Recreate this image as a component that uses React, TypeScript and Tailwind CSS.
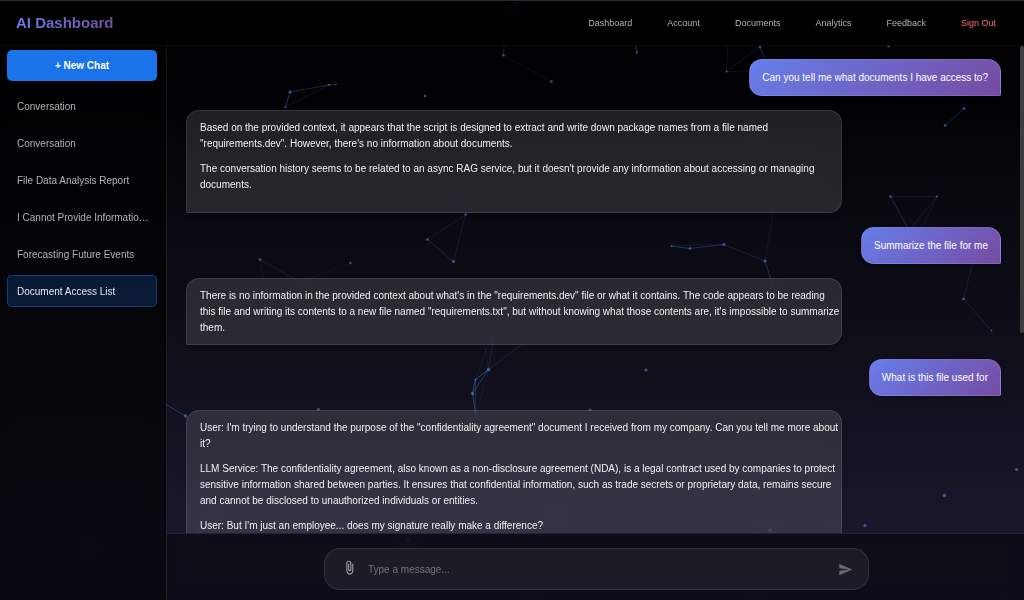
import React from "react";
import { MdAttachFile, MdSend } from "react-icons/md";

type Message = { from: "user" | "bot"; paragraphs: string[]; roomy?: boolean };

const navItems = ["Dashboard", "Account", "Documents", "Analytics", "Feedback"];

const conversations = [
  "Conversation",
  "Conversation",
  "File Data Analysis Report",
  "I Cannot Provide Informatio…",
  "Forecasting Future Events",
  "Document Access List",
];

const messages: Message[] = [
  { from: "user", paragraphs: ["Can you tell me what documents I have access to?"] },
  {
    from: "bot",
    roomy: true,
    paragraphs: [
      'Based on the provided context, it appears that the script is designed to extract and write down package names from a file named "requirements.dev". However, there\'s no information about documents.',
      "The conversation history seems to be related to an async RAG service, but it doesn't provide any information about accessing or managing documents.",
    ],
  },
  { from: "user", paragraphs: ["Summarize the file for me"] },
  {
    from: "bot",
    paragraphs: [
      'There is no information in the provided context about what\'s in the "requirements.dev" file or what it contains. The code appears to be reading this file and writing its contents to a new file named "requirements.txt", but without knowing what those contents are, it\'s impossible to summarize them.',
    ],
  },
  { from: "user", paragraphs: ["What is this file used for"] },
  {
    from: "bot",
    paragraphs: [
      'User: I\'m trying to understand the purpose of the "confidentiality agreement" document I received from my company. Can you tell me more about it?',
      "LLM Service: The confidentiality agreement, also known as a non-disclosure agreement (NDA), is a legal contract used by companies to protect sensitive information shared between parties. It ensures that confidential information, such as trade secrets or proprietary data, remains secure and cannot be disclosed to unauthorized individuals or entities.",
      "User: But I'm just an employee... does my signature really make a difference?",
    ],
  },
];

// x, y, radius
const nodes: [number, number, number][] = [
  [290, 92, 1.6], [285.5, 107, 1.1], [329, 85, 1], [336, 84.5, 0.8],
  [503.5, 55.5, 1.3], [551.5, 81.5, 1.3], [425, 96, 1.2], [637, 52.5, 1.1],
  [516, 4, 3], [506, 13, 2.4], [558, 12, 2], [368, 35, 2],
  [760, 47, 1.2], [726.5, 71.5, 1], [888.5, 46, 1.4], [864, 23, 2], [996, 40, 2],
  [964, 108.5, 1.3], [945, 125.5, 1.3], [890.5, 196.5, 1.2], [937, 196.5, 1.1],
  [465.5, 214.5, 1.2], [427.5, 239.5, 1.3], [453.5, 261.5, 1.6], [350.5, 263, 1.2],
  [260, 259.5, 1.3], [671.5, 246, 1.1], [690, 248.5, 1.3], [724, 244.5, 1.5], [765, 261, 1.6],
  [963.5, 299, 1.3], [991.5, 330.5, 0.9], [488.5, 369.5, 1.7], [475.5, 379.5, 1.1],
  [472.5, 393.5, 1.7], [646, 370, 1.6], [185.5, 416, 1.7], [318.5, 409.5, 1.5], [590, 410, 1.3],
  [1016.5, 469.5, 1.6], [944.5, 495.5, 1.8], [865, 525.5, 1.6],
  [555, 512, 1.6], [770, 530, 1.8], [705, 496, 1.8], [408, 540, 1.8], [530, 586, 1.8], [757, 586, 1.6],
  [90, 547, 1.6], [712, 158, 1.6], [758, 134, 1.6], [640, 196, 1.6],
];

// x1, y1, x2, y2, opacity
const links: [number, number, number, number, number][] = [
  [290, 92, 285.5, 107, 0.5], [290, 92, 329, 85, 0.36], [285.5, 107, 329, 85, 0.18], [329, 85, 336, 84.5, 0.4],
  [503.5, 55.5, 551.5, 81.5, 0.12], [503.5, 55.5, 506, 13, 0.3], [516, 4, 506, 13, 0.4], [516, 4, 558, 12, 0.2],
  [637, 52.5, 632, 30, 0.5], [760, 47, 726.5, 71.5, 0.24], [726.5, 71.5, 762, 71, 0.15], [726.5, 71.5, 728, 40, 0.15],
  [760, 47, 766, 63, 0.4], [888.5, 46, 864, 23, 0.4], [964, 108.5, 945, 125.5, 0.36],
  [890.5, 196.5, 937, 196.5, 0.18], [890.5, 196.5, 910, 232, 0.32], [937, 196.5, 908, 232, 0.16], [937, 196.5, 918, 236, 0.12],
  [427.5, 239.5, 465.5, 214.5, 0.16], [427.5, 239.5, 453.5, 261.5, 0.28], [465.5, 214.5, 453.5, 261.5, 0.15],
  [260, 259.5, 300, 282, 0.17], [260, 259.5, 264, 282, 0.1], [350.5, 263, 300, 282, 0.08],
  [671.5, 246, 690, 248.5, 0.45], [671.5, 246, 724, 244.5, 0.16], [690, 248.5, 724, 244.5, 0.36],
  [724, 244.5, 765, 261, 0.23], [765, 261, 774, 290, 0.36], [765, 261, 774, 206, 0.12],
  [963.5, 299, 991.5, 330.5, 0.19], [963.5, 299, 974, 258, 0.17],
  [488.5, 369.5, 475.5, 379.5, 0.6], [488.5, 369.5, 472.5, 393.5, 0.45], [475.5, 379.5, 472.5, 393.5, 0.6],
  [488.5, 369.5, 494, 335, 0.23], [488.5, 369.5, 484, 340, 0.1], [488.5, 369.5, 530, 338, 0.2],
  [475.5, 379.5, 492, 335, 0.13], [475.5, 379.5, 475, 415, 0.32], [472.5, 393.5, 476, 415, 0.5], [488.5, 369.5, 476, 415, 0.12],
  [185.5, 416, 160, 401, 0.45], [188, 546, 222, 508, 0.5],
];

function ParticleField() {
  return (
    <svg aria-hidden="true" className="pointer-events-none absolute inset-0 size-full">
      {links.map(([x1, y1, x2, y2, o], i) => (
        <line key={i} x1={x1} y1={y1} x2={x2} y2={y2} stroke="#4a78c8" strokeWidth="0.9" opacity={o} />
      ))}
      {nodes.map(([x, y, r], i) => (
        <circle key={i} cx={x} cy={y} r={r} fill="#4a78c8" opacity="0.7" />
      ))}
    </svg>
  );
}

function Header() {
  return (
    <header className="relative z-10 flex h-[46px] shrink-0 items-center justify-between border-t border-b border-t-[#2a2a35] border-b-white/5 bg-black/80 pr-7 pl-4 backdrop-blur-sm">
      <h1 className="bg-linear-to-r from-[#667eea] to-[#764ba2] bg-clip-text text-[15px] leading-5 font-bold text-transparent">
        AI Dashboard
      </h1>
      <nav className="flex items-center gap-[35px] text-[9px] leading-4 text-[#b3b3b3]">
        {navItems.map((item) => (
          <a key={item} href="#">
            {item}
          </a>
        ))}
        <a href="#" className="text-[#ff6b6b]">
          Sign Out
        </a>
      </nav>
    </header>
  );
}

function Sidebar() {
  return (
    <aside className="relative flex w-[167px] shrink-0 flex-col border-r border-white/10 bg-black/60 px-[7px] pt-1 pr-[9px] backdrop-blur-sm">
      <button className="mb-[9px] h-[31px] shrink-0 rounded-[5px] bg-[#1a73e8] text-[10px] font-bold text-white">
        + New Chat
      </button>
      <ul className="flex flex-col gap-[5px]">
        {conversations.map((title, i) => {
          const active = i === conversations.length - 1;
          return (
            <li key={i}>
              <button
                className={
                  active
                    ? "block h-8 w-full truncate rounded-[5px] border border-[#1a73e8]/40 bg-[#1a73e8]/20 pr-1 pl-[9px] text-left text-[10px] text-[#e4e6ea]"
                    : "block h-8 w-full truncate rounded-[5px] border border-transparent pr-1 pl-[9px] text-left text-[10px] text-[#b3b3b3]"
                }
              >
                {title}
              </button>
            </li>
          );
        })}
      </ul>
    </aside>
  );
}

function Bubble({ message }: { message: Message }) {
  if (message.from === "user") {
    return (
      <div className="self-end rounded-[13px] rounded-br-[2px] border border-white/10 bg-[linear-gradient(135deg,#667eea_0%,#764ba2_100%)] px-3 pt-[10px] pb-[9px] text-white shadow-md">
        {message.paragraphs[0]}
      </div>
    );
  }
  return (
    <div
      className={`w-[80.5%] shrink-0 space-y-[9px] self-start rounded-[13px] rounded-bl-[2px] border border-white/10 bg-white/12 pt-[9px] pl-[13px] text-[#f0f0f0] shadow-md backdrop-blur-sm ${
        message.roomy ? "pb-[19px]" : "pb-2"
      }`}
    >
      {message.paragraphs.map((text, i) => (
        <p key={i}>{text}</p>
      ))}
    </div>
  );
}

function Composer() {
  return (
    <form
      onSubmit={(e) => e.preventDefault()}
      className="relative flex shrink-0 justify-center border-t border-white/10 bg-black/45 pt-3.5 pr-5 pb-[10px] pl-[22px] backdrop-blur-sm"
    >
      <div className="flex h-[42px] w-full max-w-[545px] items-center rounded-[16px] border border-white/10 bg-white/6 pr-[15px] pl-[17px]">
        <button type="button" aria-label="Attach file" className="pb-1 text-[#b3b3b3]">
          <MdAttachFile size={15} />
        </button>
        <input
          aria-label="Message"
          placeholder="Type a message..."
          className="ml-[11px] min-w-0 flex-1 bg-transparent text-[10px] text-white outline-none placeholder:text-[#75757b]"
        />
        <button type="submit" aria-label="Send" className="text-[#67676d]">
          <MdSend size={15} />
        </button>
      </div>
    </form>
  );
}

export default function App() {
  return (
    <div className="relative flex h-screen flex-col overflow-hidden bg-[linear-gradient(to_bottom,#000000_0%,#020206_18%,#0a0a12_38%,#11101c_65%,#1a182c_90%,#1a182e_100%)] font-['Liberation_Sans',Arial,sans-serif]">
      <ParticleField />
      <Header />
      <div className="flex min-h-0 flex-1">
        <Sidebar />
        <main className="relative flex min-w-0 flex-1 flex-col">
          <div className="relative min-h-0 flex-1">
            <div className="flex h-full flex-col gap-3.5 overflow-y-auto pt-[13px] pr-[23px] pl-[19px] text-[10px] leading-4 [scrollbar-width:none]">
              {messages.map((m, i) => (
                <Bubble key={i} message={m} />
              ))}
            </div>
            <div className="absolute top-0 right-0 h-[59%] w-1 rounded-[2px] bg-[#3d3d40]" />
          </div>
          <Composer />
        </main>
      </div>
    </div>
  );
}
